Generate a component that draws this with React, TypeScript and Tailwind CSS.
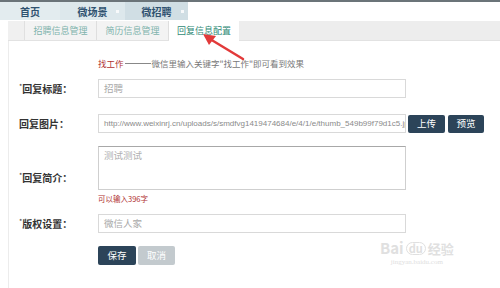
const FONT = { fontFamily: '"Noto Sans CJK SC", "Liberation Sans", sans-serif' };

function TopNav() {
  return (
    <div className="flex h-[18px] text-[10px] font-bold text-[#2f5270]">
      <div className="flex w-[60px] items-center justify-center bg-[#e3ecef]">首页</div>
      <div className="relative flex w-[65px] items-center justify-center bg-[#dde8ec]">
        微场景
        <span className="absolute right-[6px] top-[8px] h-[3px] w-[3px] bg-white/80" />
      </div>
      <div className="relative flex w-[63px] items-center justify-center bg-[#d0dee4]">
        微招聘
        <span className="absolute right-[4px] top-[8px] h-[3px] w-[3px] bg-white/80" />
      </div>
    </div>
  );
}

function SubTabs() {
  const tabs = ["招聘信息管理", "简历信息管理"];
  return (
    <div className="ml-[8px] flex h-[20px] border-b border-[#e2e2e2] bg-[#ededed] text-[9px]">
      <div className="w-[17px] border-r border-[#e0e0e0] bg-[#f0f0f0]" />
      {tabs.map((t) => (
        <div
          key={t}
          className="flex w-[72px] items-center justify-center border-r border-[#dedede] bg-[#f3f3f3] text-[#7fb3ad]"
        >
          {t}
        </div>
      ))}
      <div className="-mb-px flex w-[70px] items-center justify-center bg-white text-[#2f8a76]">
        回复信息配置
      </div>
    </div>
  );
}

function Label({ text, star = true, className = "" }: { text: string; star?: boolean; className?: string }) {
  return (
    <div className={`w-[89px] shrink-0 pl-[10px] text-[10px] font-bold text-[#333] ${className}`}>
      {star && <span className="align-top text-[7px] font-normal">*</span>}
      {text}
    </div>
  );
}

function Input({ value, url = false }: { value: string; url?: boolean }) {
  return (
    <div
      className={`flex h-[19px] w-[308px] shrink-0 items-center overflow-hidden whitespace-nowrap border border-[#d9d9d9] bg-white px-[5px] ${
        url ? "text-[8px] text-[#8a8a8a]" : "text-[9.5px] text-[#a9a9a9]"
      }`}
      style={url ? { fontFamily: '"Liberation Sans", sans-serif' } : undefined}
    >
      {value}
    </div>
  );
}

export default function App() {
  return (
    <div className="relative h-[288px] w-[500px] overflow-hidden bg-white" style={FONT}>
      <div className="h-[2px] bg-[#6b7479]" />
      <TopNav />
      <div className="h-[1px]" />
      <SubTabs />

      <div className="ml-[8px] h-[249px] border-l border-[#ececec]">
        {/* hint */}
        <div className="box-content flex h-[12px] items-center pl-[89px] pt-[16px] text-[8.5px]">
          <span className="text-[#b03030]">找工作</span>
          <span className="mx-[1px] h-px w-[26px] bg-[#888]" />
          <span className="text-[#777]">微信里输入关键字"找工作"即可看到效果</span>
        </div>

        <div className="mt-[10px] flex items-center">
          <Label text="回复标题：" />
          <Input value="招聘" />
        </div>

        <div className="mt-[16px] flex items-center">
          <Label text="回复图片：" star={false} />
          <Input value="http://www.weixinrj.cn/uploads/s/smdfvg1419474684/e/4/1/e/thumb_549b99f79d1c5.jpg" url />
          <button className="ml-[2px] h-[18px] w-[37px] shrink-0 rounded-[2px] bg-[#2c4459] text-[9.5px] text-white">上传</button>
          <button className="ml-[3px] h-[18px] w-[36px] shrink-0 rounded-[2px] bg-[#2c4459] text-[9.5px] text-white">预览</button>
        </div>

        <div className="mt-[13px] flex">
          <Label text="回复简介：" className="pt-[24px]" />
          <div className="h-[44px] w-[308px] border border-[#cfcfcf] border-t-[#a8a8a8] px-[5px] pt-[1px] text-[9.5px] text-[#b0b0b0]">
            测试测试
          </div>
        </div>

        <div className="mt-[3px] h-[12px] pl-[89px] text-[7.5px] leading-[12px] text-[#b03030]">可以输入396字</div>

        <div className="mt-[9px] flex items-center">
          <Label text="版权设置：" />
          <Input value="微信人家" />
        </div>

        <div className="mt-[13px] flex pl-[89px]">
          <button className="h-[19px] w-[38px] rounded-[2px] bg-[#2c4459] text-[9.5px] text-white">保存</button>
          <button className="ml-[2px] h-[19px] w-[37px] rounded-[2px] bg-[#c3cace] text-[9.5px] text-white">取消</button>
        </div>
      </div>

      {/* red arrow */}
      <svg className="absolute left-[198px] top-[30px]" width="50" height="34" viewBox="0 0 50 34">
        <line x1="45" y1="29" x2="12" y2="9" stroke="#e23a3a" strokeWidth="2.5" strokeLinecap="round" />
        <polygon points="5,4 18,6 11,15" fill="#e23a3a" />
      </svg>

      {/* baidu watermark */}
      <div className="absolute left-[380px] top-[240px] flex flex-col items-center text-[#e0e0e0]">
        <div className="flex items-end gap-[2px] text-[15px] font-bold leading-none">
          <span>Bai</span>
          <span className="rounded-full border border-[#e0e0e0] px-[2px] text-[11px]">du</span>
          <span className="text-[13px]">经验</span>
        </div>
        <div className="mt-[2px] text-[7px]" style={{ fontFamily: '"Liberation Serif", serif' }}>jingyan.baidu.com</div>
      </div>
    </div>
  );
}
